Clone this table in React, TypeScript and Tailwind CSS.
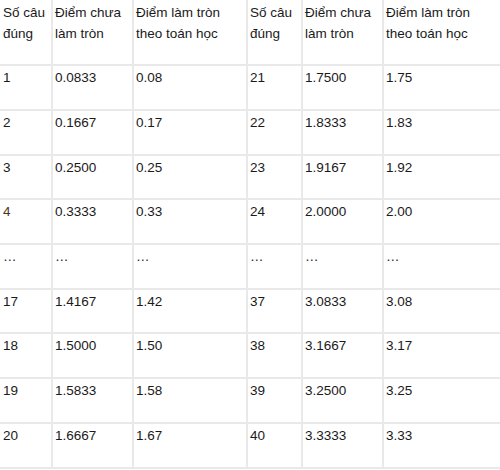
import React from "react";

type Row = {
  left: [string, string, string];
  right: [string, string, string];
  h: string;
};

// row heights include the 2px bottom line
const rows: Row[] = [
  { left: ["1", "0.0833", "0.08"], right: ["21", "1.7500", "1.75"], h: "h-[45px]" },
  { left: ["2", "0.1667", "0.17"], right: ["22", "1.8333", "1.83"], h: "h-[45px]" },
  { left: ["3", "0.2500", "0.25"], right: ["23", "1.9167", "1.92"], h: "h-[44px]" },
  { left: ["4", "0.3333", "0.33"], right: ["24", "2.0000", "2.00"], h: "h-[45px]" },
  { left: ["…", "…", "…"], right: ["…", "…", "…"], h: "h-[45px]" },
  { left: ["17", "1.4167", "1.42"], right: ["37", "3.0833", "3.08"], h: "h-[44px]" },
  { left: ["18", "1.5000", "1.50"], right: ["38", "3.1667", "3.17"], h: "h-[45px]" },
  { left: ["19", "1.5833", "1.58"], right: ["39", "3.2500", "3.25"], h: "h-[45px]" },
  { left: ["20", "1.6667", "1.67"], right: ["40", "3.3333", "3.33"], h: "h-[45px]" },
];

const widths = ["w-[53px]", "w-[81px]", "w-[114px]", "w-[55px]", "w-[81px]", "w-[120px]"];

function Cell({
  i,
  children,
  className = "",
}: {
  i: number;
  children: React.ReactNode;
  className?: string;
}) {
  return (
    <div
      className={`${widths[i]} shrink-0 h-full whitespace-nowrap ${
        i < 5 ? "border-r-2 border-[#e9e9e9]" : ""
      } ${i === 0 ? "pl-[3px]" : "pl-[2px]"} ${className}`}
    >
      {children}
    </div>
  );
}

export default function App() {
  const header = [
    ["Số câu", "đúng"],
    ["Điểm chưa", "làm tròn"],
    ["Điểm làm tròn", "theo toán học"],
    ["Số câu", "đúng"],
    ["Điểm chưa", "làm tròn"],
    ["Điểm làm tròn", "theo toán học"],
  ];

  return (
    <div
      className="w-[500px] h-[470px] overflow-hidden bg-white text-[13.5px] leading-[21px] text-[#1a1a1a]"
      style={{ fontFamily: '"Liberation Sans", Arial, sans-serif' }}
    >
      <div className="flex h-[66px] border-b-2 border-[#e9e9e9]">
        {header.map((lines, i) => (
          <Cell key={i} i={i} className="pt-[2px]">
            {lines[0]}
            <br />
            {lines[1]}
          </Cell>
        ))}
      </div>
      {rows.map((r, ri) => (
        <div key={ri} className={`flex ${r.h} border-b-2 border-[#e9e9e9]`}>
          {[...r.left, ...r.right].map((v, i) => (
            <Cell
              key={i}
              i={i}
              className={`pt-[1px] ${ri === 3 && i === 0 ? "text-[#4a3512]" : ""}`}
            >
              {v}
            </Cell>
          ))}
        </div>
      ))}
    </div>
  );
}
